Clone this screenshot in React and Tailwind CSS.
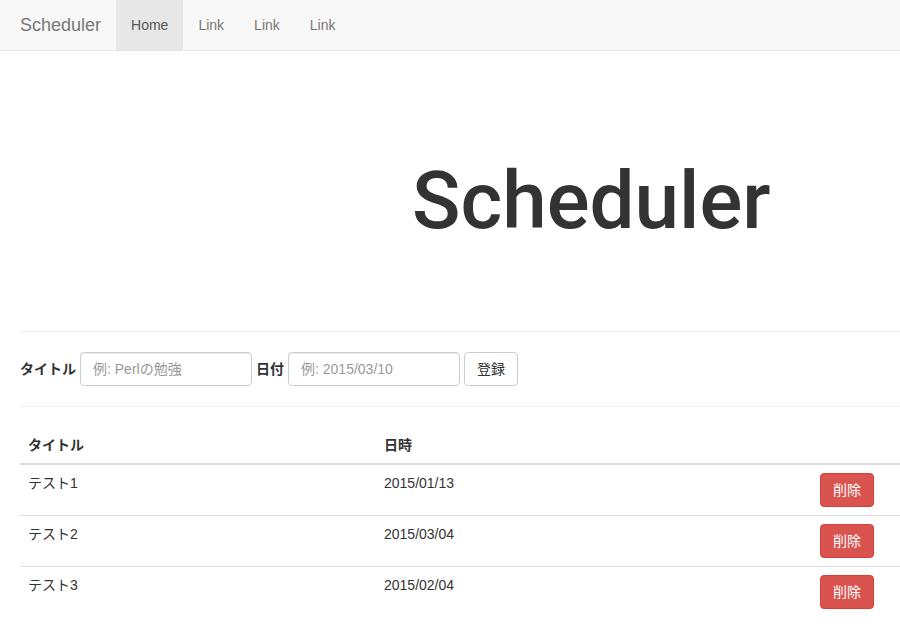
import React, { useState } from "react";

const font = { fontFamily: '"Liberation Sans", "Noto Sans CJK JP", sans-serif' };

const rows = [
    { id: 1, title: "テスト1", date: "2015/01/13" },
    { id: 2, title: "テスト2", date: "2015/03/04" },
    { id: 3, title: "テスト3", date: "2015/02/04" },
];

export default function App() {
    const [title, setTitle] = useState("");
    const [date, setDate] = useState("");

    const inputClass =
        "h-[34px] w-[172px] px-3 text-[14px] text-[#555] placeholder-[#999] bg-white border border-[#ccc] rounded-[4px] shadow-[inset_0_1px_1px_rgba(0,0,0,0.075)] outline-none";

    return (
        <div className="w-[900px] h-[634px] overflow-hidden bg-white text-[#333] text-[14px] leading-[20px]" style={font}>
            {/* navbar */}
            <nav className="h-[51px] flex items-stretch bg-[#f8f8f8] border-b border-[#e7e7e7]">
                <div className="pl-5 pr-[15px] flex items-center text-[18px] text-[#777]">Scheduler</div>
                <a className="px-[15px] flex items-center bg-[#e7e7e7] text-[#555]">Home</a>
                <a className="px-[15px] flex items-center text-[#777]">Link</a>
                <a className="px-[15px] flex items-center text-[#777]">Link</a>
                <a className="px-[15px] flex items-center text-[#777]">Link</a>
            </nav>

            {/* heading */}
            <div className="h-[280px] pt-[106px] pl-[412px]">
                <h1 className="font-['Roboto',sans-serif] text-[80px] leading-[1.1] font-medium text-[#333]">
                    Scheduler
                </h1>
            </div>

            <div className="pl-5">
                {/* form */}
                <div className="border-t border-[#eee] pt-5 pb-5 flex items-center gap-1">
                    <label className="font-bold">タイトル</label>
                    <input
                        className={inputClass}
                        placeholder="例: Perlの勉強"
                        value={title}
                        onChange={(e) => setTitle(e.target.value)}
                    />
                    <label className="font-bold">日付</label>
                    <input
                        className={inputClass}
                        placeholder="例: 2015/03/10"
                        value={date}
                        onChange={(e) => setDate(e.target.value)}
                    />
                    <button className="h-[34px] px-3 bg-white border border-[#ccc] rounded-[4px] text-[#333]">登録</button>
                </div>

                {/* table */}
                <div className="border-t border-[#eee] pt-5">
                    <div className="grid grid-cols-[356px_1fr_80px] border-b-2 border-[#ddd] font-bold">
                        <div className="p-2">タイトル</div>
                        <div className="p-2">日時</div>
                        <div className="p-2"></div>
                    </div>
                    {rows.map((r, i) => (
                        <div
                            key={r.id}
                            className={
                                i < rows.length - 1
                                    ? "grid grid-cols-[356px_1fr_80px] border-b border-[#ddd]"
                                    : "grid grid-cols-[356px_1fr_80px]"
                            }
                        >
                            <div className="p-2">{r.title}</div>
                            <div className="p-2">{r.date}</div>
                            <div className="py-2">
                                <button className="h-[34px] px-3 bg-[#d9534f] border border-[#d43f3a] rounded-[4px] text-white">
                                    削除
                                </button>
                            </div>
                        </div>
                    ))}
                </div>
            </div>
        </div>
    );
}
